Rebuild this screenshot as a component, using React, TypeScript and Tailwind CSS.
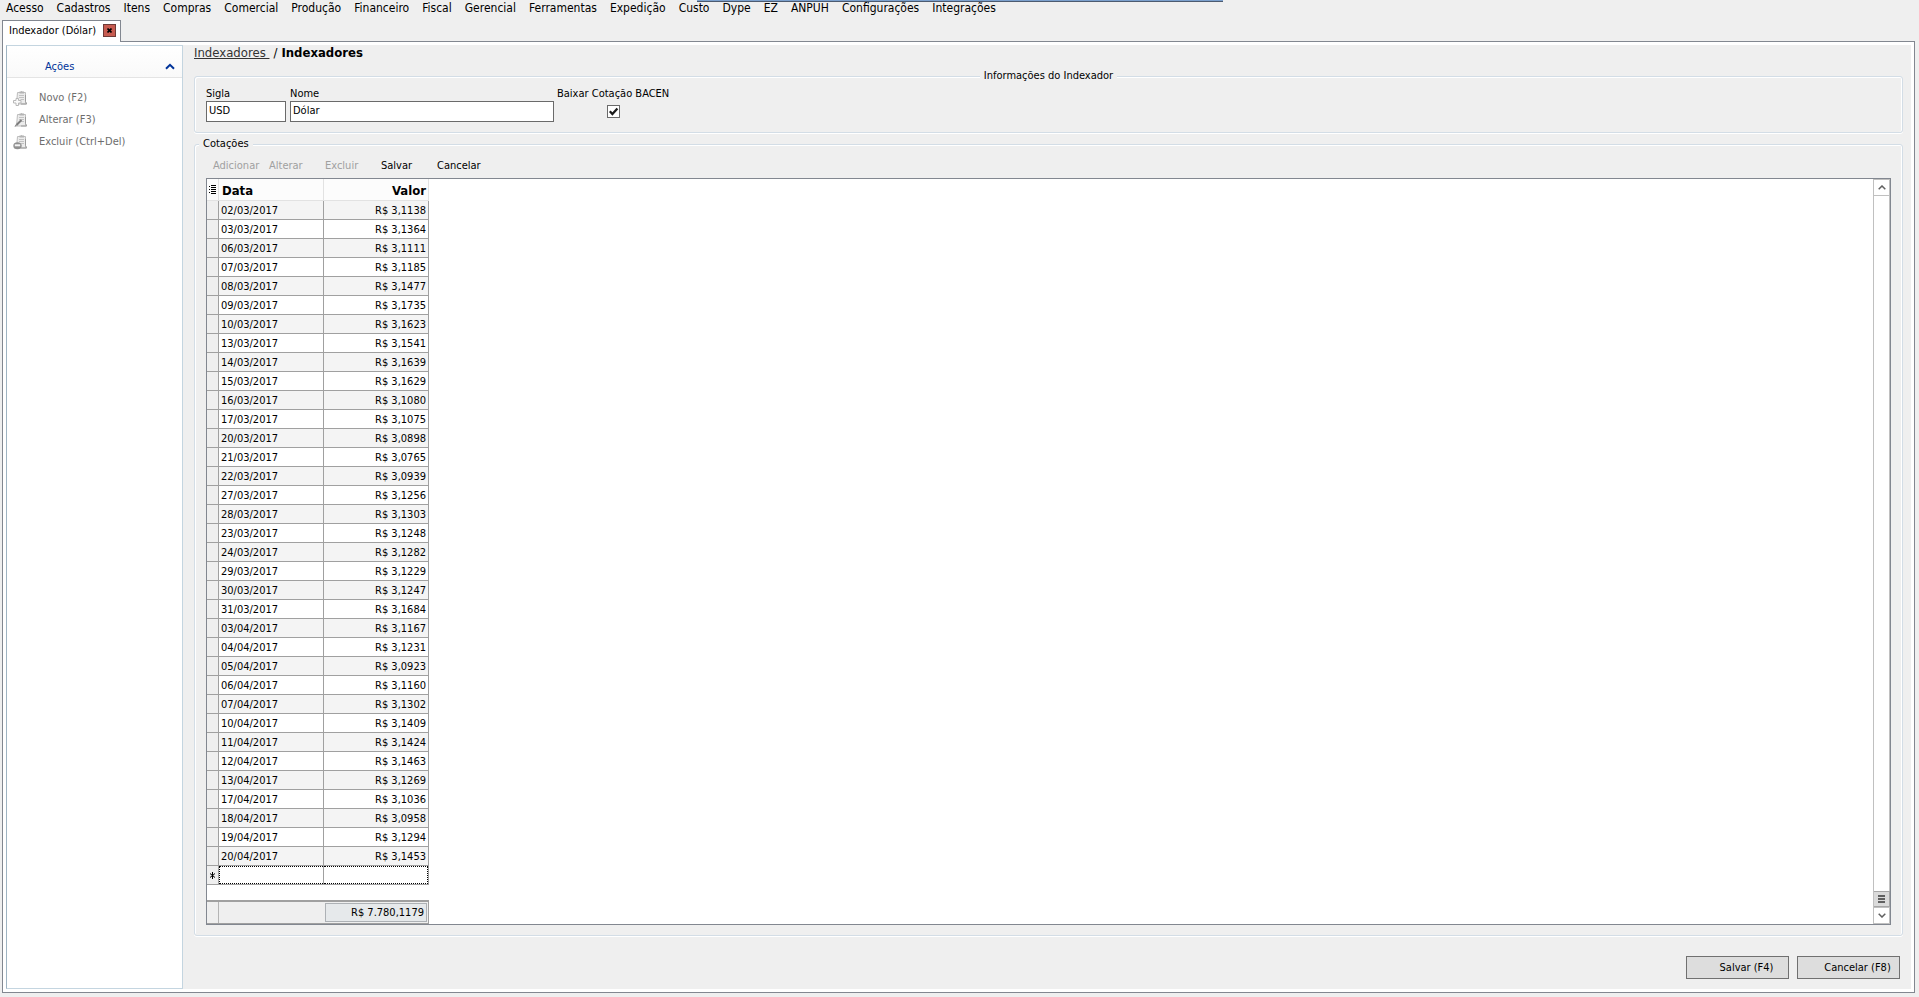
import { useState } from "react";

const menuItems = [
  "Acesso",
  "Cadastros",
  "Itens",
  "Compras",
  "Comercial",
  "Produção",
  "Financeiro",
  "Fiscal",
  "Gerencial",
  "Ferramentas",
  "Expedição",
  "Custo",
  "Dype",
  "EZ",
  "ANPUH",
  "Configurações",
  "Integrações",
];

const quotes = [
  { date: "02/03/2017", value: "R$ 3,1138" },
  { date: "03/03/2017", value: "R$ 3,1364" },
  { date: "06/03/2017", value: "R$ 3,1111" },
  { date: "07/03/2017", value: "R$ 3,1185" },
  { date: "08/03/2017", value: "R$ 3,1477" },
  { date: "09/03/2017", value: "R$ 3,1735" },
  { date: "10/03/2017", value: "R$ 3,1623" },
  { date: "13/03/2017", value: "R$ 3,1541" },
  { date: "14/03/2017", value: "R$ 3,1639" },
  { date: "15/03/2017", value: "R$ 3,1629" },
  { date: "16/03/2017", value: "R$ 3,1080" },
  { date: "17/03/2017", value: "R$ 3,1075" },
  { date: "20/03/2017", value: "R$ 3,0898" },
  { date: "21/03/2017", value: "R$ 3,0765" },
  { date: "22/03/2017", value: "R$ 3,0939" },
  { date: "27/03/2017", value: "R$ 3,1256" },
  { date: "28/03/2017", value: "R$ 3,1303" },
  { date: "23/03/2017", value: "R$ 3,1248" },
  { date: "24/03/2017", value: "R$ 3,1282" },
  { date: "29/03/2017", value: "R$ 3,1229" },
  { date: "30/03/2017", value: "R$ 3,1247" },
  { date: "31/03/2017", value: "R$ 3,1684" },
  { date: "03/04/2017", value: "R$ 3,1167" },
  { date: "04/04/2017", value: "R$ 3,1231" },
  { date: "05/04/2017", value: "R$ 3,0923" },
  { date: "06/04/2017", value: "R$ 3,1160" },
  { date: "07/04/2017", value: "R$ 3,1302" },
  { date: "10/04/2017", value: "R$ 3,1409" },
  { date: "11/04/2017", value: "R$ 3,1424" },
  { date: "12/04/2017", value: "R$ 3,1463" },
  { date: "13/04/2017", value: "R$ 3,1269" },
  { date: "17/04/2017", value: "R$ 3,1036" },
  { date: "18/04/2017", value: "R$ 3,0958" },
  { date: "19/04/2017", value: "R$ 3,1294" },
  { date: "20/04/2017", value: "R$ 3,1453" },
];

type ActionKind = "new" | "edit" | "delete";

const actions: { kind: ActionKind; label: string }[] = [
  { kind: "new", label: "Novo (F2)" },
  { kind: "edit", label: "Alterar (F3)" },
  { kind: "delete", label: "Excluir (Ctrl+Del)" },
];

const toolbar = [
  { label: "Adicionar", disabled: true },
  { label: "Alterar", disabled: true },
  { label: "Excluir", disabled: true },
  { label: "Salvar", disabled: false },
  { label: "Cancelar", disabled: false },
];

const groupBox =
  "min-w-0 rounded-[3px] border border-[#d3dde6] shadow-[inset_1px_1px_0_#fff,inset_-1px_0_0_#fff,0_1px_0_#fff]";

function ActionIcon({ kind }: { kind: ActionKind }) {
  return (
    <svg className="h-4 w-4 shrink-0" viewBox="0 0 16 16" fill="none">
      <path d="M4.5 2.5h8v9l1 2.5H3.5z" fill="#ececec" stroke="#bdbdbd" />
      <path d="M12.5 5v6.5l1 2.5H8" stroke="#9c9c9c" />
      <path d="M6.5 3.5v-2h1.2a1 1 0 0 1 1.8 0h1.5v2z" fill="#b4b4b4" />
      <path d="M6 5.5h5M6 7.5h5M7.5 9.5h3.5" stroke="#c2c2c2" />
      {kind === "new" && (
        <path
          d="M3 8.5h2.5v2H8V13H5.5v2.5H3V13H.5v-2.5H3z"
          fill="#fafafa"
          stroke="#b8b8b8"
        />
      )}
      {kind === "edit" && (
        <>
          <path d="M3.5 13l5-5" stroke="#7c7c7c" strokeWidth="2" />
          <path d="M1.5 15l.9-2.6 1.7 1.7z" fill="#8f8f8f" />
        </>
      )}
      {kind === "delete" && (
        <>
          <ellipse cx="4.5" cy="11.8" rx="4.2" ry="3.5" fill="#909090" />
          <path d="M1.8 11.3h5.4" stroke="#f4f4f4" strokeWidth="2" />
        </>
      )}
    </svg>
  );
}

function ScrollBar() {
  return (
    <div className="flex w-[17px] shrink-0 flex-col border-l border-[#c0c0c0] bg-white">
      <button
        aria-label="Rolar para cima"
        className="flex h-[17px] items-center justify-center border border-l-0 border-[#c0c0c0]"
      >
        <svg width="8" height="5" viewBox="0 0 8 5" fill="none">
          <path d="M.7 4.3L4 1l3.3 3.3" stroke="#606060" strokeWidth="1.5" />
        </svg>
      </button>
      <div className="flex-1 border-r border-[#c0c0c0]" />
      <button
        aria-label="Posição"
        className="flex h-4 flex-col items-center justify-center gap-px border border-l-0 border-[#a6a6a6] bg-[#dadada]"
      >
        <span className="h-0.5 w-[7px] bg-[#606060]" />
        <span className="h-0.5 w-[7px] bg-[#606060]" />
        <span className="h-0.5 w-[7px] bg-[#606060]" />
      </button>
      <button
        aria-label="Rolar para baixo"
        className="flex h-[17px] items-center justify-center border border-l-0 border-[#c0c0c0]"
      >
        <svg width="8" height="5" viewBox="0 0 8 5" fill="none">
          <path d="M.7 .7L4 4 7.3 .7" stroke="#606060" strokeWidth="1.5" />
        </svg>
      </button>
    </div>
  );
}

function QuotesGrid() {
  return (
    <div className="flex flex-1 border border-[#828790] bg-white">
      <div className="flex flex-1 flex-col">
        <table className="w-[222px] table-fixed border-separate border-spacing-0">
          <colgroup>
            <col className="w-3" />
            <col className="w-[105px]" />
            <col className="w-[105px]" />
          </colgroup>
          <thead>
            <tr className="h-[22px] bg-[#fcfcfc] text-[13px] leading-4">
              <th className="border-r border-b border-[#e2e2e2] p-0">
                <svg className="mx-auto" width="7" height="9" viewBox="0 0 7 9">
                  <path
                    d="M0 1.5h1M2 .5h5M2 2.5h5M0 4.5h1M2 4.5h5M2 6.5h5M0 7.5h1M2 8.5h5"
                    stroke="#000"
                  />
                </svg>
              </th>
              <th className="border-r border-b border-[#e2e2e2] p-0 pt-0.5 pl-[3px] text-left font-bold">
                Data
              </th>
              <th className="border-r border-b border-[#e2e2e2] p-0 pt-0.5 pr-0.5 text-right font-bold">
                Valor
              </th>
            </tr>
          </thead>
          <tbody>
            {quotes.map((quote) => (
              <tr
                key={quote.date}
                className="h-[19px] bg-white odd:bg-[#f4f4f4]"
              >
                <td className="border-r border-b border-[#a0a0a0] bg-[#efefef] p-0" />
                <td className="border-r border-b border-[#a0a0a0] p-0 pt-0.5 pl-0.5">
                  {quote.date}
                </td>
                <td className="border-r border-b border-[#a0a0a0] p-0 pt-0.5 pr-0.5 text-right">
                  {quote.value}
                </td>
              </tr>
            ))}
            {/* blank row waiting for a new quote */}
            <tr className="h-[19px]">
              <td className="border-r border-b border-[#a0a0a0] bg-[#efefef] p-0">
                <svg
                  className="mx-auto"
                  width="7"
                  height="7"
                  viewBox="0 0 7 7"
                  stroke="#000"
                >
                  <path d="M3.5 0v7M1 1.5l5 4M6 1.5l-5 4" />
                </svg>
              </td>
              <td className="border-r border-b border-[#a0a0a0] p-0">
                <div className="h-[18px] border border-r-0 border-dotted border-black" />
              </td>
              <td className="border-r border-b border-[#a0a0a0] p-0">
                <div className="h-[18px] border border-l-0 border-dotted border-black" />
              </td>
            </tr>
          </tbody>
        </table>

        <div className="min-h-3 flex-1" />

        <div className="flex h-6 w-[222px] border-t-2 border-r border-b border-[#a0a0a0] bg-[#efefef]">
          <div className="w-3 border-r border-[#b4b4b4]" />
          <div className="flex-1" />
          <output className="my-px mr-px w-[102px] border border-[#adb1b5] bg-[#e6e9eb] pr-0.5 text-right leading-[18px]">
            R$ 7.780,1179
          </output>
        </div>
      </div>
      <ScrollBar />
    </div>
  );
}

export default function App() {
  const [sigla, setSigla] = useState("USD");
  const [nome, setNome] = useState("Dólar");
  const [bacen, setBacen] = useState(true);

  return (
    <div className="relative flex min-h-screen flex-col bg-[#efefef] pr-1 pb-1 pl-0.5 font-['DejaVu_Sans_Condensed','DejaVu_Sans',sans-serif] text-[11px] leading-[14px] text-black">
      {/* edge of the docked bar above the menu */}
      <div className="absolute inset-x-0 top-0 mx-auto h-0.5 w-[526px] border-b border-[#4d5b70] bg-[#7ba0cd]" />

      <nav className="flex h-5 gap-[13px] pl-1 text-xs leading-4">
        {menuItems.map((item) => (
          <button key={item} className="h-4">
            {item}
          </button>
        ))}
      </nav>

      <div className="flex">
        <div className="z-10 -mb-px flex h-[22px] w-[119px] items-center justify-between border border-b-0 border-[#828790] bg-white pr-1 pb-0.5 pl-1.5">
          <span className="whitespace-nowrap">Indexador (Dólar)</span>
          <button
            aria-label="Fechar aba"
            className="flex h-[13px] w-[13px] items-center justify-center border border-[#6e3a36] bg-[#c75b50]"
          >
            <svg width="5" height="5" viewBox="0 0 5 5" stroke="#000">
              <path d="M.5 .5l4 4M4.5 .5l-4 4" strokeWidth="1.6" />
            </svg>
          </button>
        </div>
      </div>

      <div className="flex flex-1 border border-[#828790] bg-white p-[3px]">
        <aside className="w-[177px] shrink-0 border border-[#c4d5e0] border-l-[#9fb4c2] bg-white">
          <button className="flex h-8 w-full items-center justify-between border-b border-[#e4e4e4] bg-linear-to-b from-white to-[#f9f9f9] pt-2.5 pr-[7px] pl-[38px] text-[#003399]">
            Ações
            <svg width="10" height="7" viewBox="0 0 10 7" fill="none">
              <path d="M1 5.8L5 1.8l4 4" stroke="#003399" strokeWidth="2" />
            </svg>
          </button>
          <ul className="flex flex-col gap-1.5 pt-3 pl-1.5 text-[#6d6d6d]">
            {actions.map((action) => (
              <li key={action.kind}>
                <button className="flex h-4 items-center gap-2.5">
                  <ActionIcon kind={action.kind} />
                  {action.label}
                </button>
              </li>
            ))}
          </ul>
        </aside>

        <main className="flex flex-1 flex-col bg-[#efefef] pr-2 pb-2.5 pl-[11px]">
          <div className="mb-2 h-4 text-[13px] leading-4">
            <a href="#" className="whitespace-pre text-[#333] underline">
              {"Indexadores "}
            </a>
            <span className="mx-1">/</span>
            <strong>Indexadores</strong>
          </div>

          <fieldset className={`${groupBox} px-[11px] pt-1 pb-2.5`}>
            <legend className="mx-auto bg-[#efefef] px-1">
              Informações do Indexador
            </legend>
            <div className="flex items-start gap-1">
              <div className="flex w-20 flex-col">
                <label htmlFor="sigla">Sigla</label>
                <input
                  id="sigla"
                  value={sigla}
                  onChange={(e) => setSigla(e.target.value)}
                  className="h-[21px] border border-[#6a6a6a] bg-white px-0.5 pb-0.5"
                />
              </div>
              <div className="flex w-[264px] flex-col">
                <label htmlFor="nome">Nome</label>
                <input
                  id="nome"
                  value={nome}
                  onChange={(e) => setNome(e.target.value)}
                  className="h-[21px] border border-[#6a6a6a] bg-white px-0.5 pb-0.5"
                />
              </div>
              <div className="-ml-px flex flex-col items-center gap-1">
                <label htmlFor="bacen">Baixar Cotação BACEN</label>
                <span className="grid">
                  <input
                    id="bacen"
                    type="checkbox"
                    checked={bacen}
                    onChange={(e) => setBacen(e.target.checked)}
                    className="peer col-start-1 row-start-1 h-[13px] w-[13px] appearance-none border border-[#6a6a6a] bg-white"
                  />
                  <svg
                    className="pointer-events-none invisible col-start-1 row-start-1 peer-checked:visible"
                    width="13"
                    height="13"
                    viewBox="0 0 13 13"
                    fill="none"
                  >
                    <path
                      d="M2.8 6.2l2.6 2.9L10.4 3.4"
                      stroke="#1b1b1b"
                      strokeWidth="2.2"
                    />
                  </svg>
                </span>
              </div>
            </div>
          </fieldset>

          <fieldset
            className={`${groupBox} mt-1 flex flex-1 flex-col px-[11px] pb-2.5`}
          >
            <legend className="-ml-[7px] bg-[#efefef] px-1">Cotações</legend>
            <div className="flex h-[27px] items-center pt-0.5 pl-[7px]">
              {toolbar.map((item) => (
                <button
                  key={item.label}
                  disabled={item.disabled}
                  className="w-14 text-left disabled:text-[#a0a0a0]"
                >
                  {item.label}
                </button>
              ))}
            </div>
            <QuotesGrid />
          </fieldset>

          <div className="mt-5 flex justify-end gap-2 pr-[3px]">
            <button className="h-[23px] w-[103px] border border-[#707070] bg-[#dddddd] pl-[18px]">
              Salvar (F4)
            </button>
            <button className="h-[23px] w-[103px] border border-[#707070] bg-[#dddddd] pl-[18px]">
              Cancelar (F8)
            </button>
          </div>
        </main>
      </div>
    </div>
  );
}
